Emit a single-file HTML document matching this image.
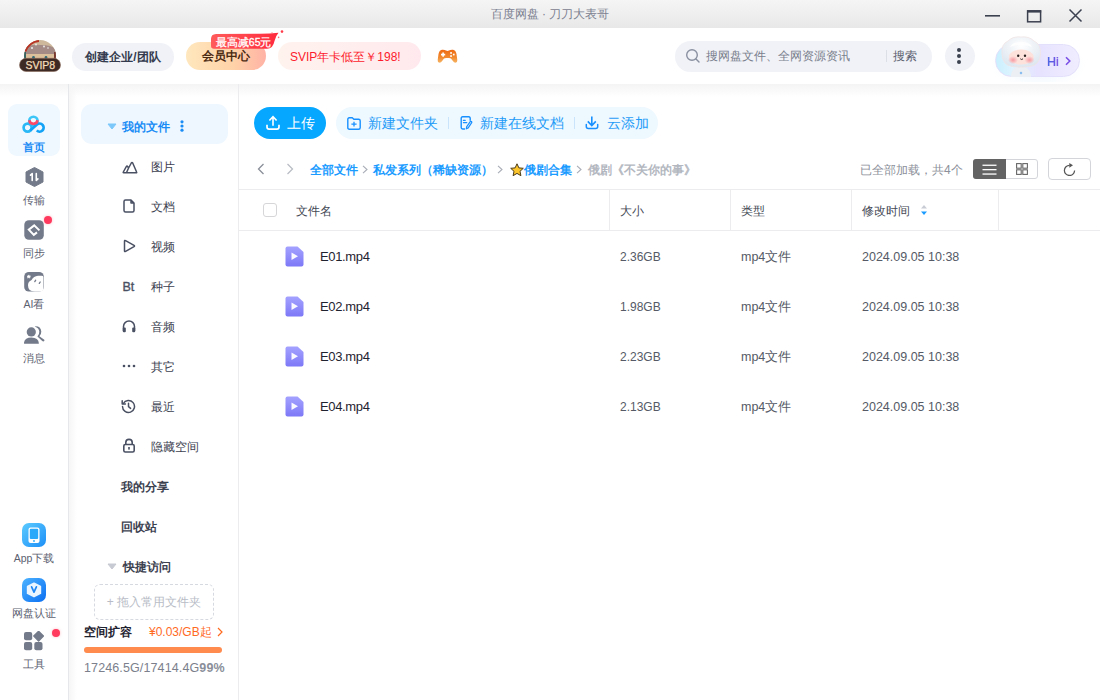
<!DOCTYPE html>
<html><head><meta charset="utf-8">
<style>
*{box-sizing:border-box;margin:0;padding:0}
html,body{width:1100px;height:700px;overflow:hidden;background:#fff;font-family:"Liberation Sans",sans-serif;}
.a{position:absolute}
#titlebar{position:absolute;left:0;top:0;width:1100px;height:28px;background:linear-gradient(#f5f5f5,#e8e8e8);}
#titlebar .t{position:absolute;left:0;width:1100px;top:6px;text-align:center;font-size:12px;color:#7b8090;line-height:16px}
#header{position:absolute;left:0;top:28px;width:1100px;height:56px;background:#fff}
#hshadow{position:absolute;left:0;top:84px;width:1100px;height:13px;background:linear-gradient(#f4f4f4,#fff)}
#railline{position:absolute;left:68px;top:84px;width:1px;height:616px;background:#e6e7ea}
#railsh{position:absolute;left:69px;top:84px;width:8px;height:616px;background:linear-gradient(90deg,#f6f6f7,rgba(255,255,255,0))}
#navline{position:absolute;left:238px;top:84px;width:1px;height:616px;background:#ececef}
.pill{position:absolute;border-radius:14px;line-height:28px;text-align:center}
.ri{position:absolute;left:0;width:68px;text-align:center;font-size:10.5px;color:#5c6170;line-height:12px}
.nv{position:absolute;left:70px;width:168px;height:20px;font-size:12px;color:#3c4150;line-height:22px}
.nv svg{position:absolute;left:51px;top:3px}
.nv .tx{position:absolute;left:81px;top:0}
.nv.b .tx{left:51px;font-weight:bold}
.blue{color:#1a9bff}
.row{position:absolute;left:239px;width:861px;height:50px;font-size:12px;color:#3c4150}
.row .n{position:absolute;left:81px;top:18px;line-height:16px;color:#1f2330;font-size:13px;letter-spacing:-0.35px}
.row .s{position:absolute;left:381px;top:18px;line-height:16px;color:#555a66}
.row .t{position:absolute;left:502px;top:18px;font-size:12.5px;line-height:16px;color:#555a66}
.row .d{position:absolute;left:623px;top:18px;font-size:12.5px;line-height:16px;color:#555a66}
.row svg{position:absolute;left:46px;top:15px}
.hd{position:absolute;top:189px;height:42px;border-top:1px solid #ececef;border-bottom:1px solid #ececef}
.col{position:absolute;top:190px;width:1px;height:40px;background:#ececef}
.ht{position:absolute;top:203px;font-size:12px;color:#444955;line-height:16px}
</style></head><body>
<div id="titlebar"><div class="t">百度网盘 · 刀刀大表哥</div>
  <svg class="a" style="left:985px;top:9px" width="16" height="12" viewBox="0 0 16 12"><rect x="0" y="6" width="15" height="1.6" fill="#3c4150"/></svg>
  <svg class="a" style="left:1026px;top:9px" width="16" height="16" viewBox="0 0 16 16"><rect x="1.6" y="1.9" width="13" height="10.9" fill="none" stroke="#3c4150" stroke-width="1.5"/><rect x="1" y="1.2" width="14.2" height="2.4" fill="#3c4150"/></svg>
  <svg class="a" style="left:1068px;top:8px" width="16" height="16" viewBox="0 0 16 16"><path d="M1.5 1.5L13.5 13.5M13.5 1.5L1.5 13.5" stroke="#3c4150" stroke-width="1.5"/></svg>
</div>
<div id="header">
  <!-- avatar -->
  <svg class="a" style="left:19px;top:11px" width="42" height="34" viewBox="0 0 42 34">
    <defs><clipPath id="dome"><circle cx="21" cy="17" r="16"/></clipPath></defs>
    <g clip-path="url(#dome)">
      <rect x="0" y="0" width="42" height="24" fill="#cdb89c"/>
      
      <path d="M6 8 Q12 5 22 6 Q32 6 37 10 L37 16 L6 16Z" fill="#a48b86"/>
      <rect x="5" y="15" width="32" height="6" fill="#dcc09c"/>
      <rect x="4" y="13" width="3" height="8" fill="#3a6462"/>
      <rect x="35" y="13" width="3" height="8" fill="#7a3a30"/>
      <circle cx="14.5" cy="18.5" r="1.4" fill="#2f6a78"/><circle cx="27" cy="18.5" r="1.4" fill="#2f6a78"/>
      <circle cx="13" cy="9" r="1" fill="#eee"/><circle cx="17" cy="5.5" r="0.9" fill="#eee"/><circle cx="25" cy="7.5" r="0.9" fill="#eee"/><circle cx="29" cy="9" r="0.8" fill="#eee"/>
      <path d="M6.2 12.5 A15.2 15.2 0 0 1 20 1.9" fill="none" stroke="#b83424" stroke-width="2.2"/>
    </g>
    <rect x="0.5" y="19.3" width="41" height="13.2" rx="6.6" fill="#3e2a25"/>
    <rect x="0.5" y="19.3" width="41" height="13.2" rx="6.6" fill="none" stroke="#8a6a5a" stroke-width="0.6"/><text x="21.3" y="29.8" text-anchor="middle" font-family="Liberation Sans" font-size="10.5" fill="#f3dcb8" letter-spacing="0" stroke="#f3dcb8" stroke-width="0.25">SVIP8</text>
  </svg>
  <div class="pill" style="left:72px;top:15px;width:102px;height:28px;background:#f0f2f8;font-size:12px;color:#333a4d;font-weight:bold;line-height:29px">创建企业/团队</div>
  <div class="pill" style="left:186px;top:14px;width:80px;height:28px;background:linear-gradient(90deg,#ffe7bd 0%,#ffd2a8 60%,#ffb2a5 100%);font-size:12px;color:#4b2a12;font-weight:bold">会员中心</div>
  <svg class="a" style="left:210px;top:1px" width="76" height="21" viewBox="0 0 76 21">
    <defs><linearGradient id="tg" x1="0" y1="0" x2="1" y2="0"><stop offset="0" stop-color="#ff5b5b"/><stop offset="1" stop-color="#ff2b3e"/></linearGradient></defs>
    <path d="M1 10 Q1 5.2 6 5 L50 4.8 Q60 4.6 68.5 3.8 Q66 6.5 64.5 12 Q63 19.8 57 19.8 L4 19.8 Q1 19.8 1 17Z" fill="url(#tg)"/>
    <circle cx="72" cy="2.6" r="1.3" fill="#ff3b4a"/><circle cx="68.6" cy="8.4" r="0.8" fill="#ff6a78"/><circle cx="62" cy="3.6" r="0.6" fill="#ff8a95"/>
  </svg>
  <div class="a" style="left:216px;top:7px;font-size:10.5px;line-height:14px;color:#fff;-webkit-text-stroke:0.3px #fff;letter-spacing:-0.05px">最高减65元</div>
  <div class="pill" style="left:278px;top:14px;width:143px;height:28px;background:linear-gradient(90deg,#fff3ee,#ffe9ee);font-size:12px;color:#fc1b2c;line-height:30px;text-align:left;padding-left:12px">SVIP年卡低至￥198!</div>
  <svg class="a" style="left:437px;top:21px" width="21" height="15" viewBox="0 0 21 15">
    <defs><linearGradient id="gm" x1="0" y1="0" x2="0" y2="1"><stop offset="0" stop-color="#ee6a12"/><stop offset="0.6" stop-color="#f18a30"/><stop offset="1" stop-color="#f6b565"/></linearGradient></defs>
    <path d="M5 0.7 Q7.5 0.4 9 1.6 Q10.5 2.3 12 1.6 Q13.5 0.4 16 0.7 Q18.8 1.3 19.5 5 L20.3 11 Q20.6 13.6 18.5 13.8 Q17 13.8 15.5 11.5 L14 9.6 Q13 9 12 9 H9 Q8 9 7 9.6 L5.5 11.5 Q4 13.8 2.5 13.8 Q0.4 13.6 0.7 11 L1.5 5 Q2.2 1.3 5 0.7Z" fill="url(#gm)"/>
    <path d="M6.1 3.5 V7.7 M4 5.6 H8.2" stroke="#fff" stroke-width="1.6"/>
    <rect x="13.2" y="3.1" width="1.7" height="1.7" fill="#fff"/><rect x="13.2" y="6.2" width="1.7" height="1.7" fill="#fff"/><rect x="15.9" y="4.7" width="1.7" height="1.7" fill="#fff"/>
  </svg>
  <!-- search -->
  <div class="a" style="left:675px;top:13px;width:257px;height:31px;border-radius:15.5px;background:#f0f2f7"></div>
  <svg class="a" style="left:685px;top:20px" width="16" height="16" viewBox="0 0 16 16"><circle cx="7" cy="7" r="5.3" fill="none" stroke="#8a90a0" stroke-width="1.4"/><path d="M11 11L14 14" stroke="#8a90a0" stroke-width="1.4" stroke-linecap="round"/></svg>
  <div class="a" style="left:706px;top:20px;font-size:12px;line-height:16px;color:#7a7f8d">搜网盘文件、全网资源资讯</div>
  <div class="a" style="left:886px;top:22px;width:1px;height:12px;background:#dcdfe6"></div>
  <div class="a" style="left:893px;top:20px;font-size:12px;line-height:16px;color:#5c6170">搜索</div>
  <div class="a" style="left:945px;top:13px;width:30px;height:30px;border-radius:50%;background:#f0f2f7"></div>
  <svg class="a" style="left:956px;top:19px" width="6" height="18" viewBox="0 0 6 18"><circle cx="3" cy="3" r="2" fill="#3c4150"/><circle cx="3" cy="9" r="2" fill="#3c4150"/><circle cx="3" cy="15" r="2" fill="#3c4150"/></svg>
  <!-- Hi -->
  <div class="a" style="left:990px;top:12px;width:96px;height:42px;border-radius:21px;background:radial-gradient(ellipse at 50% 60%,rgba(225,240,255,.6),rgba(255,255,255,0) 70%)"></div>
  <div class="a" style="left:995px;top:16px;width:85px;height:33px;border-radius:16.5px;background:linear-gradient(90deg,#c9f0ff 0%,#dff3ff 20%,#e6e2ff 50%,#f0edff 100%);border:1px solid #e3e0fb"></div>
  <svg class="a" style="left:1000px;top:8px" width="44" height="41" viewBox="0 0 44 41">
    <defs>
      <radialGradient id="hg" cx="0.5" cy="0.3" r="0.7"><stop offset="0" stop-color="#ffffff"/><stop offset="1" stop-color="#dde6ef"/></radialGradient>
      <radialGradient id="ck" cx="0.5" cy="0.5" r="0.5"><stop offset="0" stop-color="#f69aa3"/><stop offset="1" stop-color="#f69aa3" stop-opacity="0"/></radialGradient>
    </defs>
    <path d="M31 39 Q30 31 21 30.5 Q12 31 11 39 L11 41 L31 41Z" fill="#eceff3"/>
    <path d="M2 18 Q1 8 8 5 Q13 0 21 1 Q29 0 34 5 Q41 8 40.5 18 Q40 29 30 30.5 Q21 32 12 30.5 Q2.5 29 2 18Z" fill="url(#hg)" stroke="#f1e4e4" stroke-width="0.8"/>
    <path d="M10 11 Q12 6 21 6 Q30 6 32 11 Q28 9 21 9 Q14 9 10 11Z" fill="#fff" opacity="0.8"/>
    <ellipse cx="21.2" cy="21" rx="12.5" ry="7.6" fill="#fde2dc"/>
    <ellipse cx="13" cy="24" rx="5" ry="4" fill="url(#ck)"/><ellipse cx="29.5" cy="24" rx="5" ry="4" fill="url(#ck)"/>
    <circle cx="18.2" cy="19.8" r="1.2" fill="#2a2020"/><circle cx="25" cy="19.8" r="1.2" fill="#2a2020"/>
    <path d="M20.3 22.8 Q21.6 24.2 23 22.8" stroke="#2a2020" stroke-width="0.9" fill="none"/>
    <path d="M19.5 37 L21 35.5 L22.5 37 L21 38.5Z" fill="#7fb8f0"/>
  </svg>
  <div class="a" style="left:1047px;top:27px;font-size:12.5px;line-height:14px;-webkit-text-stroke:0.2px #5a5ae0;background:linear-gradient(90deg,#3f6ae6,#8a4fe6);-webkit-background-clip:text;background-clip:text;color:transparent">Hi</div>
  <svg class="a" style="left:1064px;top:28px" width="8" height="10" viewBox="0 0 8 10"><path d="M2 1.2L5.8 5L2 8.8" fill="none" stroke="#7a4fe6" stroke-width="1.6"/></svg>
</div>
<div id="hshadow"></div>
<div id="railsh"></div>
<div id="railline"></div>
<div id="navline"></div>

<!-- rail -->
<div class="a" style="left:8px;top:104px;width:52px;height:52px;border-radius:9px;background:#eff7ff"></div>
<svg class="a" style="left:22px;top:113px" width="24" height="21" viewBox="0 0 24 21">
  <circle cx="11.4" cy="7.9" r="4.2" fill="none" stroke="#3cc6f8" stroke-width="2.6"/>
  <circle cx="5.6" cy="14.6" r="4" fill="none" stroke="#2ab9f6" stroke-width="2.7"/>
  <path d="M8.2 17.6 L15 11.6 A4 4 0 1 1 14.8 17.4" fill="none" stroke="#12a3f7" stroke-width="2.7"/>
  <path d="M7.25 7.3 A4.2 4.2 0 0 0 15.55 7.3" fill="none" stroke="#fb4a68" stroke-width="2.6"/>
</svg>
<div class="ri" style="top:141px;color:#1a8cf5;font-weight:bold">首页</div>
<svg class="a" style="left:25px;top:167px" width="19" height="20" viewBox="0 0 19 20"><path d="M9.5 0.5 L18 5 V15 L9.5 19.5 L1 15 V5Z" fill="#737a89" stroke="#737a89" stroke-width="1" stroke-linejoin="round"/><path d="M7.2 13.5V6.5L5.5 8.1" fill="none" stroke="#fff" stroke-width="1.6" stroke-linecap="round" stroke-linejoin="round"/><path d="M11.3 6.5V13.5L12.9 11.9" fill="none" stroke="#fff" stroke-width="1.6" stroke-linecap="round" stroke-linejoin="round"/></svg>
<div class="ri" style="top:194px">传输</div>
<svg class="a" style="left:24px;top:220px" width="20" height="20" viewBox="0 0 20 20"><rect x="0.3" y="0.2" width="19.5" height="19.6" rx="4.6" fill="#737a89"/><path d="M13 12.4 L9.8 14.9 L4.8 9.6 L10.2 5.4 L15.4 10.4" fill="none" stroke="#fff" stroke-width="2" stroke-linejoin="miter"/><path d="M7.8 10 L10 8 L12 10" fill="none" stroke="#737a89" stroke-width="0"/></svg>
<div class="a" style="left:44px;top:216px;width:8px;height:8px;border-radius:50%;background:#ff3a5e;box-shadow:0 0 3px rgba(255,60,90,.35)"></div>
<div class="ri" style="top:247px">同步</div>
<svg class="a" style="left:24px;top:272px" width="20" height="20" viewBox="0 0 20 20"><rect x="0.2" y="0" width="19.6" height="19.6" rx="4.6" fill="#737a89"/><path d="M19.4 5 L19.4 16.5 Q19.4 19.4 16.5 19.4 L10.5 19.4 Q4 19.4 4 13.2 Q4 9.6 7.6 8 Q9.6 4 14 3.7 L17.6 3.7 Q19.4 3.7 19.4 5Z" fill="#fff"/><path d="M4.8 2.9 L5.4 4 L6.6 4.1 L5.7 4.9 L6 6.1 L4.8 5.5 L3.6 6.1 L3.9 4.9 L3 4.1 L4.2 4Z" fill="#fff" stroke="#fff" stroke-width="0.6" stroke-linejoin="round"/><path d="M11.7 8.2 L10.8 9.6 M16.2 10 L15.3 11.4" stroke="#737a89" stroke-width="1.3" stroke-linecap="round"/></svg>
<div class="ri" style="top:298px">AI看</div>
<svg class="a" style="left:24px;top:326px" width="22" height="19" viewBox="0 0 22 19"><path d="M10.8 0.4 Q16.8 0 17.3 5.5 Q17.3 8.6 15.4 10.2 L20.3 13.8 Q21 15.2 19.5 15.4 Q18.6 15.4 18 14.7 L13.4 10.6 Q15.5 8.5 15.3 5.5 Q15 2 10.8 0.4Z" fill="#737a89"/><circle cx="7.3" cy="5.9" r="5.2" fill="#fff"/><circle cx="7.3" cy="5.9" r="4.6" fill="#737a89"/><path d="M-0.1 17.2 Q0.4 11.7 7.4 11.6 Q14.4 11.7 14.9 17.2 Q14.9 17.8 14.2 17.8 H0.6 Q-0.1 17.8 -0.1 17.2Z" fill="#737a89"/></svg>
<div class="ri" style="top:352px">消息</div>

<svg class="a" style="left:22px;top:523px" width="24" height="24" viewBox="0 0 24 24"><defs><linearGradient id="ap" x1="0" y1="0" x2="1" y2="1"><stop offset="0" stop-color="#5ccbff"/><stop offset="1" stop-color="#1d8ff7"/></linearGradient></defs><rect width="24" height="24" rx="7" fill="url(#ap)"/><rect x="6.5" y="4.5" width="11" height="15.5" rx="2" fill="#fff"/><rect x="7.8" y="5.8" width="8.4" height="10.2" rx="1" fill="#2aa9fb"/><circle cx="12" cy="18" r="0.9" fill="#2aa9fb"/></svg>
<div class="ri" style="top:552px">App下载</div>
<svg class="a" style="left:22px;top:578px" width="24" height="24" viewBox="0 0 24 24"><defs><linearGradient id="vp" x1="0" y1="0" x2="1" y2="1"><stop offset="0" stop-color="#4db3ff"/><stop offset="1" stop-color="#0b6ff2"/></linearGradient></defs><rect width="24" height="24" rx="7" fill="url(#vp)"/><path d="M12 5.2 L18.4 8.4 V15.4 L12 18.6 L5.6 15.4 V8.4Z" fill="#eaf5ff" stroke="#eaf5ff" stroke-width="1.6" stroke-linejoin="round"/><path d="M9.6 8.8 L12 14.2 L14.4 8.8" fill="none" stroke="#1f86f4" stroke-width="1.7" stroke-linecap="round" stroke-linejoin="round"/></svg>
<div class="ri" style="top:607px">网盘认证</div>
<svg class="a" style="left:24px;top:631px" width="20" height="20" viewBox="0 0 20 20"><rect x="0" y="1" width="8.2" height="8.2" rx="2" fill="#737a89"/><rect x="0" y="11" width="8.2" height="8.2" rx="2" fill="#737a89"/><rect x="10.3" y="11" width="8.2" height="8.2" rx="2" fill="#737a89"/><path d="M14.6 0.3 L19.4 5.1 L14.6 9.9 L9.8 5.1Z" fill="#737a89" stroke="#737a89" stroke-width="1.4" stroke-linejoin="round"/></svg>
<div class="a" style="left:52px;top:629px;width:8px;height:8px;border-radius:50%;background:#ff3a5e;box-shadow:0 0 3px rgba(255,60,90,.35)"></div>
<div class="ri" style="top:658px">工具</div>

<!-- nav -->
<div class="a" style="left:81px;top:104px;width:147px;height:40px;border-radius:11px;background:#eef7ff"></div>
<svg class="a" style="left:107px;top:123px" width="10" height="7" viewBox="0 0 10 7"><path d="M1 1 H9 L5 6Z" fill="#7cc8fb" stroke="#7cc8fb" stroke-width="1" stroke-linejoin="round"/></svg>
<div class="a" style="left:122px;top:119px;font-size:12px;line-height:16px;color:#1a8cf5;font-weight:bold">我的文件</div>
<svg class="a" style="left:180px;top:120px" width="4" height="12" viewBox="0 0 4 12"><circle cx="2" cy="1.8" r="1.6" fill="#1a8cf5"/><circle cx="2" cy="6" r="1.6" fill="#1a8cf5"/><circle cx="2" cy="10.2" r="1.6" fill="#1a8cf5"/></svg>

<div class="nv" style="top:156px"><svg width="16" height="13" viewBox="0 0 16 13" style="left:52px;top:5px"><path d="M1.6 11.8 Q0.9 11.8 1.3 11 L4.3 5.6 Q5 4.6 5.7 5.6 L6.6 7 L9.3 2 Q10 0.9 10.7 2 L14.6 11 Q15 11.8 14.2 11.8Z M6.6 7 L4.4 11.8" fill="none" stroke="#4a5063" stroke-width="1.5" stroke-linejoin="round"/></svg><div class="tx">图片</div></div>
<div class="nv" style="top:196px"><svg width="14" height="14" viewBox="0 0 14 14" style="left:52px;top:3px"><path d="M3.5 1 H9 L12 4 V11.5 Q12 13 10.5 13 H3.5 Q2 13 2 11.5 V2.5 Q2 1 3.5 1Z M9 1 V4 H12" fill="none" stroke="#4a5063" stroke-width="1.5" stroke-linejoin="round"/></svg><div class="tx">文档</div></div>
<div class="nv" style="top:236px"><svg width="14" height="14" viewBox="0 0 14 14" style="left:52px;top:3px"><path d="M2.5 2.2 Q2.5 1 3.6 1.6 L12 6.3 Q13 7 12 7.7 L3.6 12.4 Q2.5 13 2.5 11.8Z" fill="none" stroke="#4a5063" stroke-width="1.5" stroke-linejoin="round"/></svg><div class="tx">视频</div></div>
<div class="nv" style="top:276px"><div class="a" style="left:52.5px;top:0;font-size:12.5px;color:#4a5063;-webkit-text-stroke:0.35px #4a5063">Bt</div><div class="tx">种子</div></div>
<div class="nv" style="top:316px"><svg width="14" height="14" viewBox="0 0 14 14" style="left:52px;top:3px"><path d="M1.5 12 V7.5 A5.5 5.5 0 0 1 12.5 7.5 V12" fill="none" stroke="#4a5063" stroke-width="1.5"/><rect x="0.8" y="8.5" width="3" height="4.8" rx="1" fill="#4a5063"/><rect x="10.2" y="8.5" width="3" height="4.8" rx="1" fill="#4a5063"/></svg><div class="tx">音频</div></div>
<div class="nv" style="top:356px"><svg width="14" height="14" viewBox="0 0 14 14" style="left:52px;top:3px"><circle cx="2" cy="7" r="1.3" fill="#4a5063"/><circle cx="7" cy="7" r="1.3" fill="#4a5063"/><circle cx="12" cy="7" r="1.3" fill="#4a5063"/></svg><div class="tx">其它</div></div>
<div class="nv" style="top:396px"><svg width="15" height="15" viewBox="0 0 15 15" style="left:51px;top:3px"><path d="M2.3 4.5 A6 6 0 1 1 1.5 7.5" fill="none" stroke="#4a5063" stroke-width="1.5" stroke-linecap="round"/><path d="M1.2 1.8 V5 H4.4" fill="none" stroke="#4a5063" stroke-width="1.5" stroke-linecap="round" stroke-linejoin="round"/><path d="M7.5 4.3 V7.7 L9.6 9.4" fill="none" stroke="#4a5063" stroke-width="1.5" stroke-linecap="round" stroke-linejoin="round"/></svg><div class="tx">最近</div></div>
<div class="nv" style="top:436px"><svg width="14" height="15" viewBox="0 0 14 15" style="left:52px;top:2px"><path d="M3.8 6.5 V4.6 A3.2 3.2 0 0 1 10.2 4.6 V6.5" fill="none" stroke="#4a5063" stroke-width="1.6"/><rect x="1.8" y="6.5" width="10.4" height="7.5" rx="1.5" fill="none" stroke="#4a5063" stroke-width="1.6"/><rect x="6.2" y="9" width="1.6" height="2.6" fill="#4a5063"/></svg><div class="tx">隐藏空间</div></div>
<div class="nv b" style="top:476px"><div class="tx">我的分享</div></div>
<div class="nv b" style="top:516px"><div class="tx">回收站</div></div>
<svg class="a" style="left:107px;top:563px" width="10" height="7" viewBox="0 0 10 7"><path d="M1 1 H9 L5 6Z" fill="#c7cad2" stroke="#c7cad2" stroke-width="1" stroke-linejoin="round"/></svg>
<div class="nv b" style="top:556px"><div class="tx" style="left:53px">快捷访问</div></div>
<div class="a" style="left:94px;top:584px;width:120px;height:36px;border:1px dashed #d6d9df;border-radius:6px;font-size:12px;color:#b8bcc6;text-align:center;line-height:34px">+ 拖入常用文件夹</div>
<div class="a" style="left:84px;top:624px;font-size:12px;line-height:16px;color:#1f2330;font-weight:bold">空间扩容</div>
<div class="a" style="left:149px;top:624px;font-size:12px;line-height:16px;color:#ff6a1f">¥0.03/GB起</div>
<svg class="a" style="left:217px;top:627px" width="6" height="10" viewBox="0 0 6 10"><path d="M1 1L5 5L1 9" fill="none" stroke="#ff6a1f" stroke-width="1.2"/></svg>
<div class="a" style="left:84px;top:647px;width:138px;height:6px;border-radius:3px;background:#ff8b4e"></div>
<div class="a" style="left:84px;top:660px;font-size:12.5px;letter-spacing:0.12px;line-height:16px;color:#7b808c;white-space:nowrap">17246.5G/17414.4G<b style="color:#8a8f9a">99%</b></div>

<!-- main toolbar -->
<div class="a" style="left:254px;top:107px;width:72px;height:32px;border-radius:16px;background:#06a7ff"></div>
<svg class="a" style="left:265px;top:115px" width="16" height="16" viewBox="0 0 16 16"><path d="M8 10.8 V1.8 M4.4 5.5 L8 1.6 L11.6 5.5" fill="none" stroke="#fff" stroke-width="1.6" stroke-linejoin="miter"/><path d="M2 9.8 V12 Q2 14.1 4.1 14.1 H11.9 Q14 14.1 14 12 V9.8" fill="none" stroke="#fff" stroke-width="1.7" stroke-linecap="butt"/></svg>
<div class="a" style="left:287px;top:114px;font-size:14px;line-height:18px;color:#fff">上传</div>

<div class="a" style="left:336px;top:107px;width:322px;height:32px;border-radius:16px;background:#eef8ff"></div>
<div class="a" style="left:368px;top:114px;font-size:14px;line-height:18px;color:#1f9cf7">新建文件夹</div>
<div class="a" style="left:448px;top:117px;width:1px;height:12px;background:#c9e4fb"></div>
<div class="a" style="left:480px;top:114px;font-size:14px;line-height:18px;color:#1f9cf7">新建在线文档</div>
<div class="a" style="left:574px;top:117px;width:1px;height:12px;background:#c9e4fb"></div>
<div class="a" style="left:607px;top:114px;font-size:14px;line-height:18px;color:#1f9cf7">云添加</div>

<!-- breadcrumb -->
<svg class="a" style="left:257px;top:163px" width="8" height="12" viewBox="0 0 8 12"><path d="M6.5 1 L1.5 6 L6.5 11" fill="none" stroke="#8a8f99" stroke-width="1.3"/></svg>
<svg class="a" style="left:286px;top:163px" width="8" height="12" viewBox="0 0 8 12"><path d="M1.5 1 L6.5 6 L1.5 11" fill="none" stroke="#b9bdc5" stroke-width="1.3"/></svg>
<div class="a" style="left:310px;top:162px;font-size:12px;line-height:16px;font-weight:bold;color:#1a9bff;white-space:nowrap">全部文件</div>
<svg class="a" style="left:362px;top:165px" width="6" height="9" viewBox="0 0 6 9"><path d="M1 0.8 L5 4.5 L1 8.2" fill="none" stroke="#a9adb6" stroke-width="1.1"/></svg>
<div class="a" style="left:373px;top:162px;font-size:12px;line-height:16px;font-weight:bold;color:#1a9bff;white-space:nowrap">私发系列（稀缺资源）</div>
<svg class="a" style="left:497px;top:165px" width="6" height="9" viewBox="0 0 6 9"><path d="M1 0.8 L5 4.5 L1 8.2" fill="none" stroke="#a9adb6" stroke-width="1.1"/></svg>
<svg class="a" style="left:509.5px;top:163px" width="14" height="14" viewBox="0 0 14 14"><path d="M7 0.8 L8.9 4.9 L13.3 5.3 L10 8.3 L10.9 12.7 L7 10.4 L3.1 12.7 L4 8.3 L0.7 5.3 L5.1 4.9Z" fill="#fcc52c" stroke="#4a3a18" stroke-width="1" stroke-linejoin="round"/></svg>
<div class="a" style="left:524px;top:162px;font-size:12px;line-height:16px;font-weight:bold;color:#1a9bff;white-space:nowrap">俄剧合集</div>
<svg class="a" style="left:576px;top:165px" width="6" height="9" viewBox="0 0 6 9"><path d="M1 0.8 L5 4.5 L1 8.2" fill="none" stroke="#a9adb6" stroke-width="1.1"/></svg>
<div class="a" style="left:588px;top:162px;font-size:12px;line-height:16px;font-weight:bold;color:#b3b7bf;white-space:nowrap">俄剧《不关你的事》</div>

<div class="a" style="left:860px;top:162px;font-size:12px;line-height:16px;color:#8c909a;white-space:nowrap">已全部加载，共4个</div>
<div class="a" style="left:973px;top:159px;width:65px;height:20px;border:1px solid #d3d5da;border-radius:3px;background:#fff"></div>
<div class="a" style="left:973px;top:159px;width:33px;height:20px;border-radius:3px 0 0 3px;background:#636363"></div>
<svg class="a" style="left:982px;top:163px" width="15" height="12" viewBox="0 0 15 12"><rect x="0.5" y="1.6" width="14" height="1.3" fill="#fff"/><rect x="0.5" y="6" width="14" height="1.3" fill="#fff"/><rect x="0.5" y="10.4" width="14" height="1.3" fill="#fff"/></svg>
<svg class="a" style="left:1016px;top:163px" width="12" height="12" viewBox="0 0 12 12"><rect x="0.6" y="0.6" width="4.6" height="4.6" fill="none" stroke="#666" stroke-width="1.1"/><rect x="6.8" y="0.6" width="4.6" height="4.6" fill="none" stroke="#666" stroke-width="1.1"/><rect x="0.6" y="6.8" width="4.6" height="4.6" fill="none" stroke="#666" stroke-width="1.1"/><rect x="6.8" y="6.8" width="4.6" height="4.6" fill="none" stroke="#666" stroke-width="1.1"/></svg>
<div class="a" style="left:1048px;top:158px;width:43px;height:22px;border:1px solid #d3d5da;border-radius:4px;background:#fff"></div>
<svg class="a" style="left:1062px;top:162px" width="14" height="14" viewBox="0 0 14 14"><path d="M12.6 8.6 A5.1 5.1 0 1 1 7.6 3.3" fill="none" stroke="#555" stroke-width="1.25"/><path d="M7.3 1.1 L11 3.3 L7.3 5.8Z" fill="#555"/></svg>
<svg class="a" style="left:920px;top:204px" width="8" height="12" viewBox="0 0 8 12"><path d="M4 1 L7 4.6 H1Z" fill="#c8ccd4"/><path d="M4 11 L7 7.4 H1Z" fill="#1a9bff"/></svg>

<svg class="a" style="left:347px;top:117px" width="14" height="13" viewBox="0 0 14 13"><path d="M0.8 2.3 Q0.8 0.8 2.3 0.8 H5.3 L6.8 2.2 H11.6 Q13.2 2.2 13.2 3.8 V10.7 Q13.2 12.2 11.6 12.2 H2.3 Q0.8 12.2 0.8 10.7Z" fill="none" stroke="#1890ff" stroke-width="1.4" stroke-linejoin="round"/><path d="M7 4.8 V9.6 M4.4 7.2 H9.6" stroke="#1890ff" stroke-width="1.3"/></svg>
<svg class="a" style="left:460px;top:116px" width="13" height="14" viewBox="0 0 13 14"><path d="M10.2 4.2 V2.2 Q10.2 0.8 8.8 0.8 H2.6 Q1.2 0.8 1.2 2.2 V11.6 Q1.2 13 2.6 13 H4.6" fill="none" stroke="#1890ff" stroke-width="1.4" stroke-linecap="round"/><path d="M3.4 4.4 H5.2 M3.4 6.6 H6.8" stroke="#1890ff" stroke-width="1.2" stroke-linecap="round"/><path d="M6.4 12.8 L6.6 10.8 L10.2 5.6 Q10.8 5 11.5 5.5 Q12.1 6 11.7 6.7 L8.2 11.9Z" fill="none" stroke="#1890ff" stroke-width="1.2" stroke-linejoin="round"/></svg>
<svg class="a" style="left:585px;top:116px" width="14" height="14" viewBox="0 0 14 14"><path d="M6.8 0.6 V9.6 M2.8 5.4 L6.8 9.6 L10.8 5.4" fill="none" stroke="#1890ff" stroke-width="1.6" stroke-linejoin="miter"/><path d="M1.3 8.4 V10.6 Q1.3 12.6 3.3 12.6 H10.7 Q12.7 12.6 12.7 10.6 V8.4" fill="none" stroke="#1890ff" stroke-width="1.5" stroke-linecap="round"/></svg>
<!-- table header -->
<div class="hd" style="left:239px;width:861px"></div>
<div class="col" style="left:609px"></div>
<div class="col" style="left:730px"></div>
<div class="col" style="left:851px"></div>
<div class="col" style="left:998px"></div>
<div class="a" style="left:263px;top:203px;width:14px;height:14px;border:1px solid #d6d6d8;border-radius:3px;background:#fff"></div>
<div class="ht" style="left:296px">文件名</div>
<div class="ht" style="left:620px">大小</div>
<div class="ht" style="left:741px">类型</div>
<div class="ht" style="left:862px">修改时间</div>

<div class="row" style="top:231px"><svg width="19" height="21" viewBox="0 0 19 21"><defs><linearGradient id="fg" x1="0" y1="0" x2="0" y2="1"><stop offset="0" stop-color="#a4a2ff"/><stop offset="1" stop-color="#7d78f7"/></linearGradient></defs><path d="M2.5 0.5 H12.5 L18.5 6 V18.5 Q18.5 20.5 16.5 20.5 H2.5 Q0.5 20.5 0.5 18.5 V2.5 Q0.5 0.5 2.5 0.5Z" fill="url(#fg)"/><path d="M6.5 6.5 V14 L13 10.25Z" fill="#fff" opacity="0.95"/></svg><div class="n">E01.mp4</div><div class="s">2.36GB</div><div class="t">mp4文件</div><div class="d">2024.09.05 10:38</div></div>
<div class="row" style="top:281px"><svg width="19" height="21" viewBox="0 0 19 21"><path d="M2.5 0.5 H12.5 L18.5 6 V18.5 Q18.5 20.5 16.5 20.5 H2.5 Q0.5 20.5 0.5 18.5 V2.5 Q0.5 0.5 2.5 0.5Z" fill="url(#fg)"/><path d="M6.5 6.5 V14 L13 10.25Z" fill="#fff" opacity="0.95"/></svg><div class="n">E02.mp4</div><div class="s">1.98GB</div><div class="t">mp4文件</div><div class="d">2024.09.05 10:38</div></div>
<div class="row" style="top:331px"><svg width="19" height="21" viewBox="0 0 19 21"><path d="M2.5 0.5 H12.5 L18.5 6 V18.5 Q18.5 20.5 16.5 20.5 H2.5 Q0.5 20.5 0.5 18.5 V2.5 Q0.5 0.5 2.5 0.5Z" fill="url(#fg)"/><path d="M6.5 6.5 V14 L13 10.25Z" fill="#fff" opacity="0.95"/></svg><div class="n">E03.mp4</div><div class="s">2.23GB</div><div class="t">mp4文件</div><div class="d">2024.09.05 10:38</div></div>
<div class="row" style="top:381px"><svg width="19" height="21" viewBox="0 0 19 21"><path d="M2.5 0.5 H12.5 L18.5 6 V18.5 Q18.5 20.5 16.5 20.5 H2.5 Q0.5 20.5 0.5 18.5 V2.5 Q0.5 0.5 2.5 0.5Z" fill="url(#fg)"/><path d="M6.5 6.5 V14 L13 10.25Z" fill="#fff" opacity="0.95"/></svg><div class="n">E04.mp4</div><div class="s">2.13GB</div><div class="t">mp4文件</div><div class="d">2024.09.05 10:38</div></div>

</body></html>
